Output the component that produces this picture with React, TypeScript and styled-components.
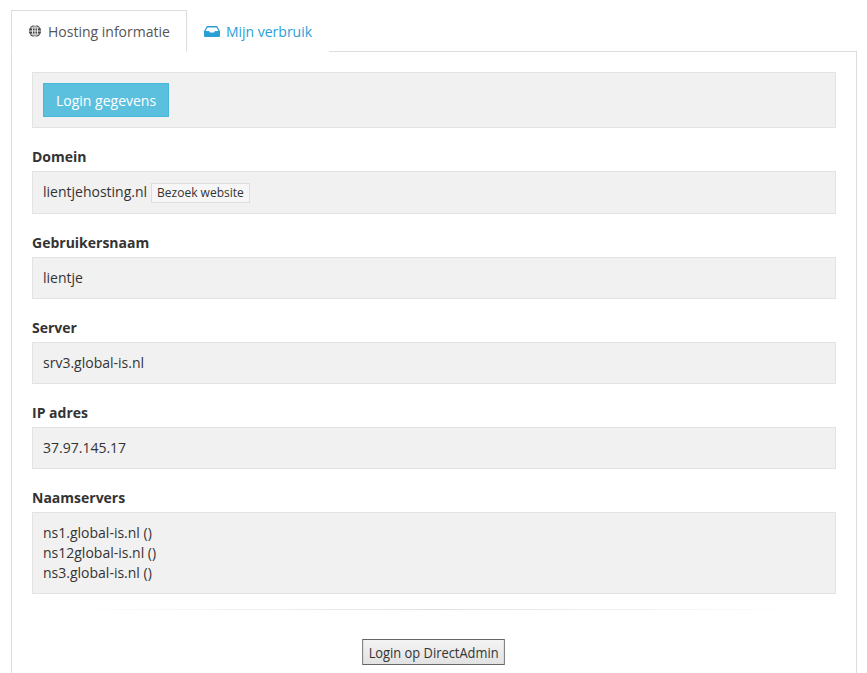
import React from 'react';
import styled, { createGlobalStyle } from 'styled-components';

const Global = createGlobalStyle`
  body { margin: 0; background: #fff; font-family: "Open Sans", sans-serif; font-size: 14px; color: #333; }
`;

const Page = styled.div`
  padding: 10px 10px 0 11px;
`;

const Tabs = styled.div`
  display: flex;
  border-bottom: 1px solid #ddd;
  height: 41px;
`;

const Tab = styled.div<{ active?: boolean }>`
  display: flex;
  align-items: center;
  gap: 6px;
  padding: 0 16px;
  height: 41px;
  box-sizing: border-box;
  margin-bottom: -1px;
  color: ${p => (p.active ? '#555' : '#2a9fd6')};
  background: #fff;
  border: 1px solid ${p => (p.active ? '#ddd' : 'transparent')};
  border-bottom-color: ${p => (p.active ? '#fff' : 'transparent')};
  height: 42px;
`;

const Panel = styled.div`
  border: 1px solid #ddd;
  border-top: none;
  padding: 20px 20px 12px 20px;
`;

const Well = styled.div<{ tall?: boolean }>`
  background: #f1f1f1;
  border: 1px solid #e3e3e3;
  padding: ${p => (p.tall ? '10px 10px' : '10px 10px')};
  min-height: 20px;
  line-height: 20px;
`;

const InfoButton = styled.button`
  background: #5bc0de;
  border: 1px solid #46b8da;
  color: #fff;
  font-family: "Open Sans", sans-serif;
  font-size: 14px;
  padding: 6px 12px;
  height: 34px;
`;

const Label = styled.div`
  font-weight: 700;
  margin: 19px 0 4px;
  line-height: 20px;
`;

const Value = styled.div`
  padding: 0 0;
  line-height: 20px;
`;

const Small = styled.span`
  display: inline-block;
  margin-left: 4px;
  font-size: 12px;
  line-height: 16px;
  padding: 1px 5px;
  border: 1px solid #ddd;
  background: #f6f6f6;
`;

const Rule = styled.hr`
  border: 0;
  height: 1px;
  margin: 0 30px;
  background: linear-gradient(to right, rgba(0,0,0,0), #e2e2e2, rgba(0,0,0,0));
`;

const Footer = styled.div`
  margin-top: 15px;
`;

const Center = styled.div`
  display: flex;
  justify-content: center;
  padding: 29px 0 10px;
`;

const DAButton = styled.button`
  font-family: "Open Sans", sans-serif;
  font-size: 14px;
  color: #333;
  background: linear-gradient(#f4f4f4, #e2e2e2);
  border: 1px solid #666;
  padding: 0 6px;
  height: 26px;
  transform: scaleX(0.92);
`;

const Globe = () => (
  <svg width="14" height="14" viewBox="0 0 16 16">
    <circle cx="8" cy="8" r="7" fill="#444" />
    <path d="M1 8h14M8 1v14M3 4.5h10M3 11.5h10" stroke="#fff" strokeWidth="1" fill="none" />
    <ellipse cx="8" cy="8" rx="3" ry="7" stroke="#fff" strokeWidth="1" fill="none" />
  </svg>
);

const Inbox = () => (
  <svg width="16" height="12" viewBox="0 0 16 12">
    <path d="M3 1h10l3 5v5a1 1 0 0 1-1 1H1a1 1 0 0 1-1-1V6z" fill="#2a9fd6" />
    <path d="M3.5 2.5h9l2 3.5h-3.5l-1 1.5h-4l-1-1.5H1.5z" fill="#fff" />
  </svg>
);

const fields: [string, React.ReactNode][] = [
  ['Domein', <>lientjehosting.nl<Small>Bezoek website</Small></>],
  ['Gebruikersnaam', 'lientje'],
  ['Server', 'srv3.global-is.nl'],
  ['IP adres', '37.97.145.17'],
  ['Naamservers', <>ns1.global-is.nl ()<br />ns12global-is.nl ()<br />ns3.global-is.nl ()</>],
];

export default function App() {
  return (
    <Page>
      <Global />
      <Tabs>
        <Tab active><Globe />Hosting informatie</Tab>
        <Tab><Inbox />Mijn verbruik</Tab>
      </Tabs>
      <Panel>
        <Well><InfoButton>Login gegevens</InfoButton></Well>
        {fields.map(([label, value]) => (
          <div key={label}>
            <Label>{label}</Label>
            <Well><Value>{value}</Value></Well>
          </div>
        ))}
        <Footer>
          <Rule />
          <Center><DAButton>Login op DirectAdmin</DAButton></Center>
          <Rule />
        </Footer>
      </Panel>
    </Page>
  );
}
